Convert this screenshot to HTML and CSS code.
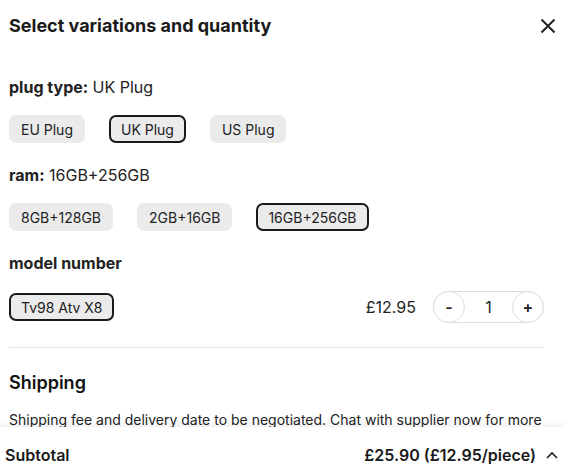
FILE: index.html
```html
<!DOCTYPE html>
<html lang="en">
<head>
<meta charset="utf-8">
<title>Select variations and quantity</title>
<link rel="stylesheet" href="styles.css">
</head>
<body>
<div class="sheet">
  <div class="scroll">
    <div class="header">
      <h1 class="title">Select variations and quantity</h1>
      <button class="close" aria-label="Close">
        <svg width="16" height="16" viewBox="0 0 16 16"><path d="M1.5 1.5 L14.5 14.5 M14.5 1.5 L1.5 14.5" stroke="#222" stroke-width="2" fill="none"/></svg>
      </button>
    </div>

    <div class="section">
      <div class="label"><b>plug type:</b> UK Plug</div>
      <div class="chips">
        <span class="chip">EU Plug</span>
        <span class="chip selected">UK Plug</span>
        <span class="chip">US Plug</span>
      </div>
    </div>

    <div class="section">
      <div class="label"><b>ram:</b> 16GB+256GB</div>
      <div class="chips">
        <span class="chip">8GB+128GB</span>
        <span class="chip">2GB+16GB</span>
        <span class="chip selected">16GB+256GB</span>
      </div>
    </div>

    <div class="section last">
      <div class="label"><b>model number</b></div>
      <div class="model-row">
        <span class="chip selected">Tv98 Atv X8</span>
        <div class="buy">
          <span class="price">£12.95</span>
          <div class="stepper">
            <button class="step">-</button>
            <span class="qty">1</span>
            <button class="step">+</button>
          </div>
        </div>
      </div>
    </div>

    <div class="divider"></div>

    <div class="shipping">
      <h2 class="ship-title">Shipping</h2>
      <p class="ship-text">Shipping fee and delivery date to be negotiated. Chat with supplier now for more details.</p>
    </div>
  </div>

  <div class="footer">
    <span class="sub-label">Subtotal</span>
    <span class="sub-value">£25.90 (£12.95/piece)
      <svg width="12" height="8" viewBox="0 0 12 8"><path d="M1 7 L6 2 L11 7" stroke="#222" stroke-width="1.6" fill="none"/></svg>
    </span>
  </div>
</div>
</body>
</html>
```

FILE: styles.css
```css
* { box-sizing: border-box; }
html, body { margin: 0; padding: 0; background: #fff; }
body {
  font-family: Inter, "Noto Sans", "Liberation Sans", sans-serif;
  color: #222;
  width: 566px;
  height: 475px;
  overflow: hidden;
}
.sheet {
  display: flex;
  flex-direction: column;
  height: 475px;
}
.scroll {
  height: 427px;
  overflow: hidden;
  padding: 0 22px 0 9px;
}
.header {
  display: flex;
  align-items: center;
  justify-content: space-between;
  height: 51px;
  margin-right: -22px;
  padding-right: 10px;
  margin-bottom: 24px;
}
.title {
  margin: 0;
  font-size: 18px;
  font-weight: 700;
  color: #1a1a1a;
  line-height: 24px;
}
.close {
  border: 0;
  background: none;
  padding: 0;
  width: 16px;
  height: 16px;
  display: flex;
}
.section {
  padding-bottom: 20px;
}
.section.last { padding-bottom: 0; }
.label {
  font-size: 16px;
  line-height: 24px;
  margin-bottom: 16px;
}
.label b { font-weight: 700; }
.chips {
  display: flex;
  gap: 24px;
}
.chip {
  display: inline-flex;
  align-items: center;
  height: 28px;
  padding: 0 10px;
  font-size: 14px;
  background: #ebebeb;
  border: 2px solid #ebebeb;
  border-radius: 7px;
  color: #222;
}
.chip.selected {
  border-color: #1a1a1a;
}
.model-row {
  display: flex;
  align-items: center;
  justify-content: space-between;
  height: 32px;
}
.buy {
  display: flex;
  align-items: center;
  gap: 17px;
}
.price {
  font-size: 16px;
}
.stepper {
  display: flex;
  align-items: center;
  justify-content: space-between;
  width: 111px;
  height: 32px;
  border: 1px solid #ddd;
  border-radius: 16px;
}
.step {
  width: 32px;
  height: 32px;
  margin: -1px;
  border: 1px solid #ddd;
  border-radius: 50%;
  background: #fff;
  font-family: inherit;
  font-size: 16px;
  font-weight: 600;
  color: #222;
  padding: 0;
}
.qty { font-size: 16px; }
.divider {
  height: 1px;
  background: #e5e5e5;
  margin: 24px 0 23px;
}
.ship-title {
  margin: 0 0 15px;
  font-size: 18px;
  font-weight: 600;
  line-height: 24px;
  color: #111;
}
.ship-text {
  margin: 0;
  font-size: 14px;
  line-height: 20px;
  max-height: 20px;
  overflow: hidden;
  color: #222;
}
.footer {
  height: 48px;
  display: flex;
  align-items: center;
  justify-content: space-between;
  padding: 8px 8px 0 5px;
  background: #fff;
  box-shadow: 0 -2px 6px rgba(0, 0, 0, 0.08);
  position: relative;
}
.sub-label {
  font-size: 16px;
  font-weight: 600;
  color: #1a1a1a;
}
.sub-value {
  font-size: 16px;
  font-weight: 600;
  color: #1a1a1a;
  display: flex;
  align-items: center;
  gap: 10px;
}
```
